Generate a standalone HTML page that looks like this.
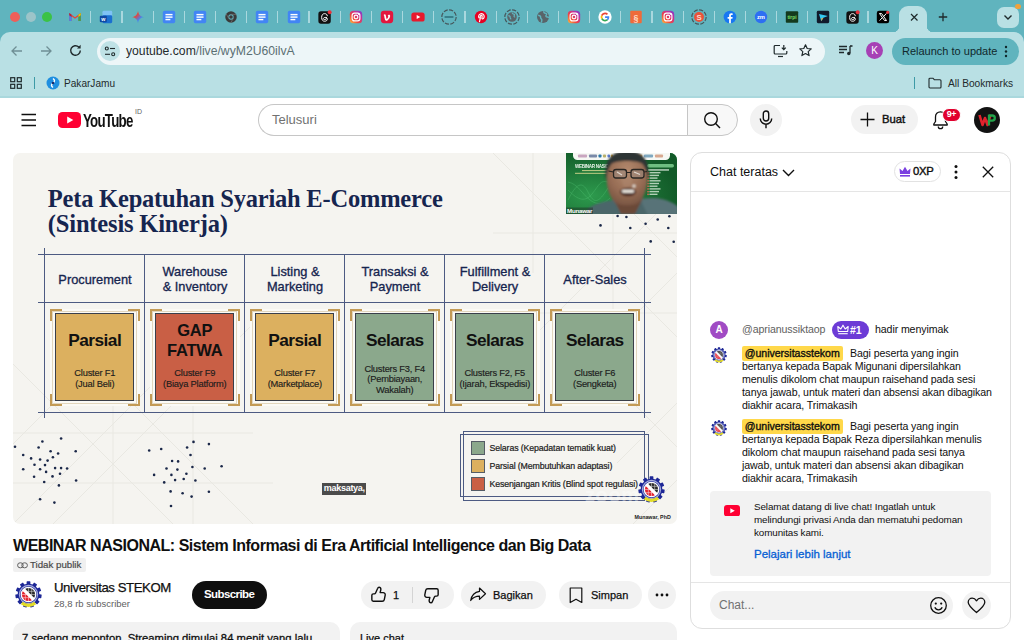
<!DOCTYPE html>
<html><head><meta charset="utf-8">
<style>
*{box-sizing:border-box;margin:0;padding:0}
html,body{width:1024px;height:640px;overflow:hidden;background:#fff;font-family:"Liberation Sans",sans-serif;color:#0f0f0f}
.abs{position:absolute}
#root{position:relative;width:1024px;height:640px;overflow:hidden}
/* browser chrome */
#tabbar{left:0;top:0;width:1024px;height:46px;background:#60b4be}
#toolbar{left:0;top:32px;width:1024px;height:65px;background:#b9e0e4;border-top-left-radius:10px;border-top-right-radius:10px}
#chromeline{left:0;top:96px;width:1024px;height:1.500px;background:#aad8dd}
.tl{width:10px;height:10px;border-radius:50%;top:11.700px}
.sep{top:10.500px;width:1.300px;height:12.500px;background:#a9d8de}
.ti{top:8.700px;width:16px;height:16px}
.ti svg{transform:scale(.885);transform-origin:50% 50%}
#url{left:97px;top:37.700px;width:728px;height:27px;border-radius:14px;background:#edf6f8}
.t{white-space:nowrap;line-height:1}

/*VCSS*/
.hd{text-align:center;font-size:12.800px;line-height:15px;color:#16254f;-webkit-text-stroke:.32px #16254f;white-space:nowrap}
.bx{text-align:center;font-weight:700;color:#111;white-space:nowrap}
.sm{text-align:center;font-size:9.300px;line-height:10.600px;letter-spacing:-.2px;color:#1c1c1c;-webkit-text-stroke:.15px #1c1c1c;white-space:nowrap}
.lg{font-size:8.800px;letter-spacing:-.13px;color:#1c1c1c;-webkit-text-stroke:.2px #1c1c1c}
/*/VCSS*//*CCSS*/
.cm{font-size:10.600px;color:#0f0f0f;letter-spacing:-.1px}
.bn{font-size:9.850px;color:#0f0f0f;letter-spacing:-.1px}
/*/CCSS*/</style></head><body><div id="root">
<!--CHROME-->
<div class="abs" id="tabbar"></div>
<div class="abs" id="toolbar"></div>
<div class="abs" id="chromeline"></div>
<div class="abs tl" style="left:10.2px;background:#ee5f59"></div>
<div class="abs tl" style="left:26.2px;background:#9cc4c9"></div>
<div class="abs tl" style="left:42.2px;background:#3bc246"></div>
<div class="abs ti" style="left:67.2px"><svg viewBox="0 0 16 16" width="16" height="16"><path d="M1.5 3.5v9h2.6V7.2L8 10l3.9-2.8v5.3h2.6v-9L8 8.2z" fill="#ea4335"/><path d="M1.5 3.5v9h2.6V5.4z" fill="#4285f4"/><path d="M14.5 3.5v9h-2.6V5.4z" fill="#34a853"/><path d="M11.9 5.4l2.6-1.9v2.6l-2.6 1.9z" fill="#fbbc04"/><path d="M4.1 5.4L1.5 3.5v2.6L4.1 8z" fill="#c5221f"/></svg></div>
<div class="abs sep" style="left:90.1px"></div>
<div class="abs ti" style="left:98.4px"><svg viewBox="0 0 16 16" width="16" height="16"><rect x="4" y="1" width="11" height="8" rx="1.5" fill="#7fc3f5"/><rect x="4" y="6" width="11" height="9" rx="1.5" fill="#1a6fd0"/><rect x="1" y="6.5" width="8" height="7.5" rx="1.2" fill="#0f4aa3"/><text x="5" y="12.6" font-family="Liberation Sans" font-size="6" font-weight="700" fill="#fff" text-anchor="middle">w</text></svg></div>
<div class="abs sep" style="left:121.3px"></div>
<div class="abs ti" style="left:129.6px"><svg viewBox="0 0 16 16" width="16" height="16"><defs><linearGradient id="gm" x1="0" y1="0" x2="1" y2="1"><stop offset="0" stop-color="#f5b400"/><stop offset=".35" stop-color="#ea4335"/><stop offset=".65" stop-color="#4285f4"/><stop offset="1" stop-color="#34a853"/></linearGradient></defs><path d="M8 .8C8.4 5 11 7.600 15.2 8 11 8.400 8.400 11 8 15.200 7.600 11 5 8.400.8 8 5 7.600 7.600 5 8 .8z" fill="url(#gm)"/></svg></div>
<div class="abs sep" style="left:152.5px"></div>
<div class="abs ti" style="left:160.7px"><svg viewBox="0 0 16 16" width="16" height="16"><rect x="1" y="1" width="14" height="14" rx="2" fill="#4285f4"/><rect x="4" y="4.5" width="8" height="1.6" fill="#fff"/><rect x="4" y="7.3" width="8" height="1.6" fill="#fff"/><rect x="4" y="10.1" width="5.5" height="1.6" fill="#fff"/></svg></div>
<div class="abs sep" style="left:183.7px"></div>
<div class="abs ti" style="left:191.9px"><svg viewBox="0 0 16 16" width="16" height="16"><rect x="1" y="1" width="14" height="14" rx="2" fill="#4285f4"/><rect x="4" y="4.5" width="8" height="1.6" fill="#fff"/><rect x="4" y="7.3" width="8" height="1.6" fill="#fff"/><rect x="4" y="10.1" width="5.5" height="1.6" fill="#fff"/></svg></div>
<div class="abs sep" style="left:214.9px"></div>
<div class="abs ti" style="left:223.1px"><svg viewBox="0 0 16 16" width="16" height="16"><circle cx="8" cy="8" r="6.500" fill="#3a3a3a"/><circle cx="8" cy="8" r="3" fill="#60b4be"/><circle cx="8" cy="8" r="2" fill="#3a3a3a"/><path d="M8 5h6M5.400 9.500l-3-5.200M10.600 9.500l-3 5.200" stroke="#777" stroke-width=".8" fill="none"/></svg></div>
<div class="abs sep" style="left:246.0px"></div>
<div class="abs ti" style="left:254.3px"><svg viewBox="0 0 16 16" width="16" height="16"><rect x="1" y="1" width="14" height="14" rx="2" fill="#4285f4"/><rect x="4" y="4.5" width="8" height="1.6" fill="#fff"/><rect x="4" y="7.3" width="8" height="1.6" fill="#fff"/><rect x="4" y="10.1" width="5.5" height="1.6" fill="#fff"/></svg></div>
<div class="abs sep" style="left:277.2px"></div>
<div class="abs ti" style="left:285.5px"><svg viewBox="0 0 16 16" width="16" height="16"><rect x="1" y="1" width="14" height="14" rx="2" fill="#4285f4"/><rect x="4" y="4.5" width="8" height="1.6" fill="#fff"/><rect x="4" y="7.3" width="8" height="1.6" fill="#fff"/><rect x="4" y="10.1" width="5.5" height="1.6" fill="#fff"/></svg></div>
<div class="abs sep" style="left:308.4px"></div>
<div class="abs ti" style="left:316.6px"><svg viewBox="0 0 16 16" width="16" height="16"><rect x="0.5" y="1.5" width="14" height="14" rx="3" fill="#111"/><path d="M10.6 6.6C10.3 4.9 9.2 4.2 7.6 4.2 5.4 4.2 4.2 5.8 4.2 8.5s1.2 4.3 3.4 4.3c1.8 0 3-1 3-2.3 0-1.3-1-2-2.4-2-1.2 0-2 .5-2 1.3 0 .7.6 1.2 1.5 1.2 1.3 0 2-1 1.9-2.6" fill="none" stroke="#fff" stroke-width="1.1" stroke-linecap="round"/><circle cx="13.3" cy="2.7" r="2.2" fill="#e8323c"/></svg></div>
<div class="abs sep" style="left:339.6px"></div>
<div class="abs ti" style="left:347.8px"><svg viewBox="0 0 16 16" width="16" height="16"><defs><linearGradient id="ig" x1="0" y1="1" x2="1" y2="0"><stop offset="0" stop-color="#fdc13f"/><stop offset=".35" stop-color="#f0483e"/><stop offset=".7" stop-color="#c4309b"/><stop offset="1" stop-color="#6a44d6"/></linearGradient></defs><rect x="1" y="1" width="14" height="14" rx="4" fill="url(#ig)"/><rect x="3.6" y="3.6" width="8.8" height="8.8" rx="2.6" fill="none" stroke="#fff" stroke-width="1.3"/><circle cx="8" cy="8" r="2.1" fill="none" stroke="#fff" stroke-width="1.3"/><circle cx="11" cy="5" r=".7" fill="#fff"/></svg></div>
<div class="abs sep" style="left:370.8px"></div>
<div class="abs ti" style="left:379.0px"><svg viewBox="0 0 16 16" width="16" height="16"><rect x="1" y="1" width="14" height="14" rx="3.500" fill="#e3173e"/><path d="M4.300 5.500c1-.9 2-.9 2.300.6l.7 3.400c.3 1 .6 1 1.300-.1.800-1.300 1.300-2.600.2-2.600.5-1.800 3.300-1.800 2.700.5-.5 1.900-2.600 5-4.300 5-1 0-1.400-.8-1.800-2.500-.4-1.600-.5-3.700-1.100-3.700z" fill="#fff"/></svg></div>
<div class="abs sep" style="left:401.9px"></div>
<div class="abs ti" style="left:410.2px"><svg viewBox="0 0 16 16" width="16" height="16"><rect x=".5" y="2.800" width="15" height="10.400" rx="3" fill="#e8192c"/><path d="M6.500 5.600v4.800L10.700 8z" fill="#fff"/></svg></div>
<div class="abs sep" style="left:433.1px"></div>
<div class="abs ti" style="left:441.4px"><svg viewBox="0 0 18 18" width="18" height="18" style="margin:-1px;transform:scale(.92)"><circle cx="9" cy="9" r="7.800" fill="none" stroke="#46595d" stroke-width="1.300" stroke-dasharray="4.600 1.500"/><path d="M4.200 9h9.600" stroke="#2c6e78" stroke-width="1.500"/></svg></div>
<div class="abs sep" style="left:464.3px"></div>
<div class="abs ti" style="left:472.5px"><svg viewBox="0 0 16 16" width="16" height="16"><circle cx="8" cy="8" r="7" fill="#e60023"/><path d="M6.300 13.300c.3-1.200.9-3.700 1-4.200-.6-1.300.1-2.900 1.200-2.900 1.300 0 .7 1.900.5 2.900-.2 1 .9 1.400 1.600.8 1.200-1 1.500-4-.2-5.100-2-1.300-5.100-.2-5.100 2.500 0 .9.300 1.300.6 1.700" fill="none" stroke="#fff" stroke-width="1.300" stroke-linecap="round"/></svg></div>
<div class="abs sep" style="left:495.5px"></div>
<div class="abs ti" style="left:503.7px"><svg viewBox="0 0 18 18" width="18" height="18" style="margin:-1px;transform:scale(.92)"><circle cx="9" cy="9" r="7.800" fill="none" stroke="#46595d" stroke-width="1.300" stroke-dasharray="4.600 1.500"/><circle cx="9" cy="9" r="5.200" fill="#596469"/><path d="M5 7.500c1.500.2 2.300.8 2 1.800-.3 1 .8 1.200.9 2.300M9.500 4.200c-.3 1 .5 1.500 1.400 1.600 1 .2 1.200 1 .5 1.700-.7.700.2 1.600 1.100 1.500" stroke="#60b4be" stroke-width="1.300" fill="none"/></svg></div>
<div class="abs sep" style="left:526.7px"></div>
<div class="abs ti" style="left:534.9px"><svg viewBox="0 0 16 16" width="16" height="16"><circle cx="8" cy="8" r="6.800" fill="#596469"/><path d="M2.500 6c1.800.3 3 1 2.800 2.400-.2 1.300 1.200 1.500 1.400 2.900.1 1-.6 1.800-.3 3M9 1.500c-.5 1.400.6 2 1.800 2.200 1.400.2 1.700 1.400.8 2.300-1 1 .2 2.200 1.400 2 1.100-.2 1.700.4 1.900 1.100" stroke="#60b4be" stroke-width="1.600" fill="none"/></svg></div>
<div class="abs sep" style="left:557.8px"></div>
<div class="abs ti" style="left:566.1px"><svg viewBox="0 0 16 16" width="16" height="16"><defs><linearGradient id="ig" x1="0" y1="1" x2="1" y2="0"><stop offset="0" stop-color="#fdc13f"/><stop offset=".35" stop-color="#f0483e"/><stop offset=".7" stop-color="#c4309b"/><stop offset="1" stop-color="#6a44d6"/></linearGradient></defs><rect x="1" y="1" width="14" height="14" rx="4" fill="url(#ig)"/><rect x="3.6" y="3.6" width="8.8" height="8.8" rx="2.6" fill="none" stroke="#fff" stroke-width="1.3"/><circle cx="8" cy="8" r="2.1" fill="none" stroke="#fff" stroke-width="1.3"/><circle cx="11" cy="5" r=".7" fill="#fff"/></svg></div>
<div class="abs sep" style="left:589.0px"></div>
<div class="abs ti" style="left:597.3px"><svg viewBox="0 0 16 16" width="16" height="16"><circle cx="8" cy="8" r="7.500" fill="#fff"/><path d="M12.800 8.150c0-.38-.03-.66-.1-.95H8.100v1.800h2.640c-.05.430-.34 1.090-.98 1.530l1.500 1.170c.9-.84 1.540-2.070 1.540-3.550z" fill="#4285f4"/><path d="M8.100 13c1.350 0 2.480-.440 3.300-1.210l-1.570-1.220c-.42.290-.98.5-1.730.5-1.320 0-2.440-.870-2.840-2.070l-1.620 1.250C4.460 11.890 6.140 13 8.100 13z" fill="#34a853"/><path d="M5.260 9c-.1-.31-.17-.65-.17-1s.06-.69.160-1L3.630 5.740C3.290 6.420 3.100 7.190 3.100 8s.19 1.580.53 2.260L5.260 9z" fill="#fbbc05"/><path d="M8.100 4.930c.94 0 1.570.4 1.930.74l1.410-1.380C10.570 3.490 9.450 3 8.100 3 6.140 3 4.460 4.110 3.630 5.740L5.250 7c.41-1.200 1.530-2.070 2.850-2.070z" fill="#ea4335"/></svg></div>
<div class="abs sep" style="left:620.2px"></div>
<div class="abs ti" style="left:628.4px"><svg viewBox="0 0 16 16" width="16" height="16"><rect x="1.500" y="1" width="13" height="14" rx="1" fill="#ef6b3a"/><text x="8" y="12" font-family="Liberation Sans" font-size="10" font-weight="700" fill="#ffd9c4" text-anchor="middle">§</text></svg></div>
<div class="abs sep" style="left:651.4px"></div>
<div class="abs ti" style="left:659.6px"><svg viewBox="0 0 16 16" width="16" height="16"><defs><linearGradient id="ig" x1="0" y1="1" x2="1" y2="0"><stop offset="0" stop-color="#fdc13f"/><stop offset=".35" stop-color="#f0483e"/><stop offset=".7" stop-color="#c4309b"/><stop offset="1" stop-color="#6a44d6"/></linearGradient></defs><rect x="1" y="1" width="14" height="14" rx="4" fill="url(#ig)"/><rect x="3.6" y="3.6" width="8.8" height="8.8" rx="2.6" fill="none" stroke="#fff" stroke-width="1.3"/><circle cx="8" cy="8" r="2.1" fill="none" stroke="#fff" stroke-width="1.3"/><circle cx="11" cy="5" r=".7" fill="#fff"/></svg></div>
<div class="abs sep" style="left:682.6px"></div>
<div class="abs ti" style="left:690.8px"><svg viewBox="0 0 18 18" width="18" height="18" style="margin:-1px;transform:scale(.92)"><circle cx="9" cy="9" r="7.800" fill="none" stroke="#46595d" stroke-width="1.300" stroke-dasharray="4.600 1.500"/><circle cx="9" cy="9" r="5.400" fill="#e8533a"/><text x="9" y="12.300" font-family="Liberation Sans" font-size="8.500" font-weight="700" fill="#ffd6cc" text-anchor="middle">S</text></svg></div>
<div class="abs sep" style="left:713.7px"></div>
<div class="abs ti" style="left:722.0px"><svg viewBox="0 0 16 16" width="16" height="16"><circle cx="8" cy="8" r="7.200" fill="#1877f2"/><path d="M9 15v-5h1.700l.3-2H9V6.700c0-.6.300-1 1.100-1H11V4c-.3 0-.8-.1-1.500-.1C8 3.900 7 4.800 7 6.400V8H5.300v2H7v5z" fill="#fff"/></svg></div>
<div class="abs sep" style="left:744.9px"></div>
<div class="abs ti" style="left:753.2px"><svg viewBox="0 0 16 16" width="16" height="16"><circle cx="8" cy="8" r="7" fill="#2d6ff2"/><text x="8" y="10.300" font-family="Liberation Sans" font-size="6.500" font-weight="700" fill="#fff" text-anchor="middle">zm</text></svg></div>
<div class="abs sep" style="left:776.1px"></div>
<div class="abs ti" style="left:784.3px"><svg viewBox="0 0 16 16" width="16" height="16"><rect x="1" y="1.500" width="14" height="13" rx="1" fill="#143a1e"/><text x="8" y="10" font-family="Liberation Sans" font-size="5.500" font-weight="700" fill="#7fe06a" text-anchor="middle">tirpi</text></svg></div>
<div class="abs sep" style="left:806.9px"></div>
<div class="abs ti" style="left:814.7px"><svg viewBox="0 0 16 16" width="16" height="16"><rect x="1" y="1" width="14" height="14" rx="1.500" fill="#111a2b"/><path d="M3.500 4.500l10 2.500-5 1.800-2.500 4z" fill="#35c8f0"/><path d="M8.500 8.800l-2.500 4 .3-3.300z" fill="#f0a030"/></svg></div>
<div class="abs sep" style="left:837.0px"></div>
<div class="abs ti" style="left:844.6px"><svg viewBox="0 0 16 16" width="16" height="16"><rect x="0.5" y="1.5" width="14" height="14" rx="3" fill="#111"/><path d="M10.6 6.6C10.3 4.9 9.2 4.2 7.6 4.2 5.4 4.2 4.2 5.8 4.2 8.5s1.2 4.3 3.4 4.3c1.8 0 3-1 3-2.3 0-1.3-1-2-2.4-2-1.2 0-2 .5-2 1.3 0 .7.6 1.2 1.5 1.2 1.3 0 2-1 1.9-2.6" fill="none" stroke="#fff" stroke-width="1.1" stroke-linecap="round"/><circle cx="13.3" cy="2.7" r="2.2" fill="#e8323c"/></svg></div>
<div class="abs sep" style="left:867.3px"></div>
<div class="abs ti" style="left:875.3px"><svg viewBox="0 0 16 16" width="16" height="16"><rect x="1" y="1" width="14" height="14" rx="2.500" fill="#000"/><path d="M4 4h2.300l5.700 8H9.700zM11.800 4L8.700 7.500M7.300 8.600L4.200 12" stroke="#fff" stroke-width="1.100" fill="none"/><circle cx="13.300" cy="2.700" r="1.800" fill="#e8323c"/></svg></div>
<div class="abs" style="left:899px;top:6px;width:28px;height:28px;background:#b9e0e4;border-radius:9px 9px 0 0"></div>
<div class="abs" style="left:893px;top:26px;width:6px;height:8px;background:radial-gradient(circle at 0 0,#60b4be 6px,#b9e0e4 6.500px)"></div>
<div class="abs" style="left:927px;top:26px;width:6px;height:8px;background:radial-gradient(circle at 100% 0,#60b4be 6px,#b9e0e4 6.500px)"></div>
<svg class="abs" style="left:908.500px;top:12px" width="10" height="10" viewBox="0 0 10 10"><path d="M2 2l6.500 6.500M8.500 2L2 8.500" stroke="#1f2a2c" stroke-width="1.200"/></svg>
<svg class="abs" style="left:936.500px;top:10.500px" width="12" height="12" viewBox="0 0 12 12"><path d="M6 1.800v8.400M1.800 6h8.400" stroke="#1f2a2c" stroke-width="1.300"/></svg>
<div class="abs" style="left:997px;top:7px;width:22px;height:21px;border-radius:7px;background:#b9e0e4"></div>
<div class="abs" style="left:1015px;top:3.500px;width:5.500px;height:5.500px;border-radius:50%;background:#f0a23c"></div>
<svg class="abs" style="left:1003px;top:14px" width="10" height="7" viewBox="0 0 10 7"><path d="M1.500 1.500L5 5l3.500-3.500" stroke="#1f2a2c" stroke-width="1.400" fill="none"/></svg>
<svg class="abs" style="left:10px;top:44px" width="14" height="14" viewBox="0 0 14 14"><path d="M12 7H2.500M6.500 2.500L2 7l4.500 4.500" stroke="#6f8f95" stroke-width="1.300" fill="none"/></svg>
<svg class="abs" style="left:39px;top:44px" width="14" height="14" viewBox="0 0 14 14"><path d="M2 7h9.500M7.500 2.500L12 7l-4.500 4.500" stroke="#6f8f95" stroke-width="1.300" fill="none"/></svg>
<svg class="abs" style="left:68px;top:43px" width="15" height="15" viewBox="0 0 15 15"><path d="M12.300 7.500a4.800 4.800 0 1 1-1.500-3.500" stroke="#1f2a2c" stroke-width="1.400" fill="none"/><path d="M12.600 1.800v3.600H9z" fill="#1f2a2c"/></svg>
<div class="abs" id="url"></div>
<div class="abs" style="left:100px;top:41px;width:20px;height:20px;border-radius:50%;background:#bfe2e6"></div>
<svg class="abs" style="left:104px;top:46px" width="12" height="11" viewBox="0 0 12 11"><circle cx="2.800" cy="2.500" r="1.500" fill="none" stroke="#1f2a2c" stroke-width="1.100"/><path d="M6 2.500h5" stroke="#1f2a2c" stroke-width="1.100"/><circle cx="9.200" cy="8.300" r="1.500" fill="none" stroke="#1f2a2c" stroke-width="1.100"/><path d="M1 8.300h5" stroke="#1f2a2c" stroke-width="1.100"/></svg>
<div class="abs t" style="left:126px;top:45px;font-size:12.200px;color:#1f2a2c">youtube.com<span style="color:#5b6f73">/live/wyM2U60ilvA</span></div>
<svg class="abs" style="left:773px;top:44px" width="15" height="14" viewBox="0 0 15 14"><path d="M7 1.500H2.200a1 1 0 0 0-1 1v6.500a1 1 0 0 0 1 1h10.600a1 1 0 0 0 1-1V7" stroke="#1f2a2c" stroke-width="1.200" fill="none"/><path d="M5 12.500h5" stroke="#1f2a2c" stroke-width="1.200"/><path d="M10.800 1v4.500M8.800 3.700l2 2 2-2" stroke="#1f2a2c" stroke-width="1.200" fill="none"/></svg>
<svg class="abs" style="left:798px;top:43px" width="15" height="15" viewBox="0 0 15 15"><path d="M7.500 1.800l1.700 3.700 4 .4-3 2.700.9 4-3.600-2.100-3.600 2.100.9-4-3-2.700 4-.4z" stroke="#1f2a2c" stroke-width="1.200" fill="none" stroke-linejoin="round"/></svg>
<svg class="abs" style="left:838px;top:44px" width="15" height="13" viewBox="0 0 15 13"><path d="M1 2.500h8M1 5.500h8M1 8.500h5" stroke="#1f2a2c" stroke-width="1.300"/><path d="M12 2v7" stroke="#1f2a2c" stroke-width="1.300"/><path d="M12 2h2.500" stroke="#1f2a2c" stroke-width="1.600"/><circle cx="10.800" cy="9.500" r="1.700" fill="#1f2a2c"/></svg>
<div class="abs" style="left:866px;top:42px;width:17px;height:17px;border-radius:50%;background:#a640b5;color:#fff;font-size:10px;text-align:center;line-height:17px">K</div>
<div class="abs" style="left:892px;top:38px;width:127px;height:27px;border-radius:14px;background:#60b4be"></div>
<div class="abs t" style="left:902px;top:46px;font-size:11px;color:#10282c">Relaunch to update</div>
<svg class="abs" style="left:1004px;top:45px" width="4" height="13" viewBox="0 0 4 13"><circle cx="2" cy="2" r="1.200" fill="#10282c"/><circle cx="2" cy="6.500" r="1.200" fill="#10282c"/><circle cx="2" cy="11" r="1.200" fill="#10282c"/></svg>
<svg class="abs" style="left:10px;top:77px" width="12" height="12" viewBox="0 0 12 12"><rect x=".7" y=".7" width="4" height="4" fill="none" stroke="#1f2a2c" stroke-width="1.200"/><rect x="7.300" y=".7" width="4" height="4" fill="none" stroke="#1f2a2c" stroke-width="1.200"/><rect x=".7" y="7.300" width="4" height="4" fill="none" stroke="#1f2a2c" stroke-width="1.200"/><rect x="7.300" y="7.300" width="4" height="4" fill="none" stroke="#1f2a2c" stroke-width="1.200"/></svg>
<div class="abs" style="left:34px;top:77px;width:1px;height:12px;background:#3d9aa6"></div>
<svg class="abs" style="left:46px;top:76px" width="14" height="14" viewBox="0 0 14 14"><circle cx="7" cy="7" r="6.500" fill="#1f8fe0"/><path d="M7 2.500c2 1.500 2 3-0 4.500s-2 3 0 4.500" stroke="#fff" stroke-width="1.400" fill="none"/><circle cx="7" cy="7" r="1.300" fill="#1a2a6c"/></svg>
<div class="abs t" style="left:64px;top:78.500px;font-size:10.100px;color:#1f2a2c">PakarJamu</div>
<div class="abs" style="left:914px;top:77px;width:1px;height:12px;background:#3d9aa6"></div>
<svg class="abs" style="left:928px;top:77px" width="14" height="12" viewBox="0 0 14 12"><path d="M1 2.200a1 1 0 0 1 1-1h3l1.300 1.500H12a1 1 0 0 1 1 1V10a1 1 0 0 1-1 1H2a1 1 0 0 1-1-1z" fill="none" stroke="#1f2a2c" stroke-width="1.100"/></svg>
<div class="abs t" style="left:948px;top:78.500px;font-size:10.200px;color:#1f2a2c">All Bookmarks</div>
<!--/CHROME-->
<!--YTHEAD-->
<svg class="abs" style="left:21px;top:113px" width="16" height="14" viewBox="0 0 16 14"><path d="M.5 1.500h14.500M.5 7h14.500M.5 12.500h14.500" stroke="#0f0f0f" stroke-width="1.300"/></svg>
<svg class="abs" style="left:58px;top:111.500px" width="23" height="16" viewBox="0 0 23 16"><rect x="0" y="0" width="23" height="16" rx="4.500" fill="#ff0033"/><path d="M9.200 4.400v7.200L15.300 8z" fill="#fff"/></svg>
<div class="abs t" id="ytword" style="left:83px;top:110.500px;font-size:19px;font-weight:700;letter-spacing:-1.100px;transform-origin:0 0;transform:scaleX(.7);color:#111">YouTube</div>
<div class="abs t" style="left:135px;top:108px;font-size:7px;color:#606060">ID</div>
<div class="abs" style="left:258px;top:104px;width:430px;height:32px;border:1px solid #c6c6c6;border-right:none;border-radius:16px 0 0 16px;background:#fff"></div>
<div class="abs" style="left:687px;top:104px;width:51px;height:32px;border:1px solid #c6c6c6;border-radius:0 16px 16px 0;background:#f8f8f8"></div>
<div class="abs t" style="left:272px;top:113px;font-size:13px;color:#717171">Telusuri</div>
<svg class="abs" style="left:703px;top:111px" width="18" height="18" viewBox="0 0 18 18"><circle cx="8" cy="8" r="6.300" fill="none" stroke="#0f0f0f" stroke-width="1.400"/><path d="M12.600 12.600L17 17" stroke="#0f0f0f" stroke-width="1.400"/></svg>
<div class="abs" style="left:750px;top:104px;width:32px;height:32px;border-radius:50%;background:#f2f2f2"></div>
<svg class="abs" style="left:758px;top:110px" width="16" height="20" viewBox="0 0 16 20"><rect x="5.300" y="1" width="5.400" height="10" rx="2.700" fill="none" stroke="#0f0f0f" stroke-width="1.400"/><path d="M2.300 8.500a5.700 5.700 0 0 0 11.400 0M8 14.200v4" stroke="#0f0f0f" stroke-width="1.400" fill="none"/></svg>
<div class="abs" style="left:851px;top:105px;width:67px;height:29px;border-radius:15px;background:#f2f2f2"></div>
<svg class="abs" style="left:860px;top:112px" width="15" height="15" viewBox="0 0 15 15"><path d="M7.500 .5v14M.5 7.500h14" stroke="#0f0f0f" stroke-width="1.300"/></svg>
<div class="abs t" style="left:882px;top:114px;font-size:11.300px;color:#0f0f0f;-webkit-text-stroke:.4px #0f0f0f;letter-spacing:-.05px">Buat</div>
<svg class="abs" style="left:932px;top:110px" width="17" height="20" viewBox="0 0 17 20"><path d="M8.500 1.800c-3 0-5 2.200-5 5.200v4.500L1.800 14v1h13.400v-1l-1.700-2.500V7c0-3-2-5.200-5-5.200z" fill="none" stroke="#0f0f0f" stroke-width="1.300" stroke-linejoin="round"/><path d="M6.300 16.500a2.200 2.200 0 0 0 4.400 0" fill="none" stroke="#0f0f0f" stroke-width="1.300"/></svg>
<div class="abs" style="left:942px;top:108px;width:19px;height:13.500px;border-radius:7px;background:#e1002d;border:1px solid #fff;color:#fff;font-size:9px;font-weight:700;text-align:center;line-height:11.500px;letter-spacing:-.3px">9+</div>
<div class="abs" style="left:974px;top:107px;width:26px;height:26px;border-radius:50%;background:#121212;overflow:hidden"><svg width="26" height="26" viewBox="0 0 26 26"><path d="M5.500 8l3 10 2.500-7 2.500 7 3-10" stroke="#e1222c" stroke-width="2.600" fill="none" stroke-linejoin="round"/><path d="M15 7.500v11M15 8.500h3.200a2.600 2.600 0 0 1 0 5.200H15" stroke="#23a34a" stroke-width="2.300" fill="none"/></svg></div>
<!--/YTHEAD-->
<!--VIDEO-->
<div class="abs" id="video" style="left:13px;top:153px;width:664px;height:371px;border-radius:7px;overflow:hidden;background:#f5f4f0">
<svg class="abs" style="left:0;top:0" width="664" height="371" viewBox="0 0 664 371"><g stroke="#e9e8e2" stroke-width="1" fill="none"><path d="M480 0l184 184M560 0l104 104M664 40L480 224M664 120L560 224M520 0v120M600 0v200M480 80h184M500 160h164"/><path d="M0 371l160-160M0 291l120-120M40 371l200-200M0 211l160 160M60 191l180 180M100 200v171M180 220v151M0 280h240M0 330h260"/><path d="M620 250l44 44M664 250l-60 60M620 371l44-44"/></g></svg>
<div class="abs t" id="st1" style="left:34.8px;top:34.30000000000001px;font-family:'Liberation Serif',serif;font-weight:700;font-size:24.500px;color:#16254f;letter-spacing:-.21px">Peta Kepatuhan Syariah E-Commerce</div>
<div class="abs t" id="st2" style="left:34.8px;top:59.30000000000001px;font-family:'Liberation Serif',serif;font-weight:700;font-size:24.500px;color:#16254f;letter-spacing:-.17px">(Sintesis Kinerja)</div>
<div class="abs" style="left:25.2px;top:101.0px;width:613.0px;height:1.0px;background:#4c5a82"></div>
<div class="abs" style="left:25.2px;top:149.0px;width:613.0px;height:1.0px;background:#4c5a82"></div>
<div class="abs" style="left:25.2px;top:258.8px;width:613.0px;height:1.0px;background:#4c5a82"></div>
<div class="abs" style="left:31.4px;top:95.2px;width:1.0px;height:170.3px;background:#4c5a82"></div>
<div class="abs" style="left:131.4px;top:101.0px;width:1.0px;height:158.3px;background:#4c5a82"></div>
<div class="abs" style="left:231.4px;top:101.0px;width:1.0px;height:158.3px;background:#4c5a82"></div>
<div class="abs" style="left:331.4px;top:101.0px;width:1.0px;height:158.3px;background:#4c5a82"></div>
<div class="abs" style="left:431.4px;top:101.0px;width:1.0px;height:158.3px;background:#4c5a82"></div>
<div class="abs" style="left:531.4px;top:101.0px;width:1.0px;height:158.3px;background:#4c5a82"></div>
<div class="abs" style="left:631.4px;top:95.2px;width:1.0px;height:170.3px;background:#4c5a82"></div>
<div class="abs hd" style="left:32px;top:119px;width:100px">Procurement</div>
<div class="abs hd" style="left:132px;top:111px;width:100px">Warehouse<br>&amp; Inventory</div>
<div class="abs hd" style="left:232px;top:111px;width:100px">Listing &amp;<br>Marketing</div>
<div class="abs hd" style="left:332px;top:111px;width:100px">Transaksi &amp;<br>Payment</div>
<div class="abs hd" style="left:432px;top:111px;width:100px">Fulfillment &amp;<br>Delivery</div>
<div class="abs hd" style="left:532px;top:119px;width:100px">After-Sales</div>
<div class="abs" style="left:37.0px;top:155.5px;width:89.5px;height:97.5px;background:#fbfaf6"></div>
<div class="abs" style="left:39.2px;top:157.7px;width:85.0px;height:93.0px;border:1px solid #e2d6bd"></div>
<div class="abs" style="left:37.0px;top:155.5px;width:12.0px;height:12.0px;border-left:2px solid #c39a55;border-top:2px solid #c39a55"></div>
<div class="abs" style="left:114.5px;top:155.5px;width:12.0px;height:12.0px;border-right:2px solid #c39a55;border-top:2px solid #c39a55"></div>
<div class="abs" style="left:37.0px;top:241.0px;width:12.0px;height:12.0px;border-left:2px solid #c39a55;border-bottom:2px solid #c39a55"></div>
<div class="abs" style="left:114.5px;top:241.0px;width:12.0px;height:12.0px;border-right:2px solid #c39a55;border-bottom:2px solid #c39a55"></div>
<div class="abs" style="left:42.4px;top:160.3px;width:79.0px;height:88.2px;background:#dcb05f;border:1px solid #3a3f4a"></div>
<div class="abs bx" style="left:37px;top:177.89999999999998px;width:89.500px;font-size:17.300px;line-height:19px;letter-spacing:-.55px">Parsial</div>
<div class="abs sm" style="left:32px;top:215.10000000000002px;width:99.500px">Cluster F1<br>(Jual Beli)</div>
<div class="abs" style="left:137.0px;top:155.5px;width:89.5px;height:97.5px;background:#fbfaf6"></div>
<div class="abs" style="left:139.2px;top:157.7px;width:85.0px;height:93.0px;border:1px solid #e2d6bd"></div>
<div class="abs" style="left:137.0px;top:155.5px;width:12.0px;height:12.0px;border-left:2px solid #c39a55;border-top:2px solid #c39a55"></div>
<div class="abs" style="left:214.5px;top:155.5px;width:12.0px;height:12.0px;border-right:2px solid #c39a55;border-top:2px solid #c39a55"></div>
<div class="abs" style="left:137.0px;top:241.0px;width:12.0px;height:12.0px;border-left:2px solid #c39a55;border-bottom:2px solid #c39a55"></div>
<div class="abs" style="left:214.5px;top:241.0px;width:12.0px;height:12.0px;border-right:2px solid #c39a55;border-bottom:2px solid #c39a55"></div>
<div class="abs" style="left:142.4px;top:160.3px;width:79.0px;height:88.2px;background:#c95f45;border:1px solid #3a3f4a"></div>
<div class="abs bx" style="left:137px;top:168.39999999999998px;width:89.500px;font-size:16.500px;line-height:19.500px;letter-spacing:-.2px">GAP<br>FATWA</div>
<div class="abs sm" style="left:132px;top:215.10000000000002px;width:99.500px">Cluster F9<br>(Biaya Platform)</div>
<div class="abs" style="left:237.0px;top:155.5px;width:89.5px;height:97.5px;background:#fbfaf6"></div>
<div class="abs" style="left:239.2px;top:157.7px;width:85.0px;height:93.0px;border:1px solid #e2d6bd"></div>
<div class="abs" style="left:237.0px;top:155.5px;width:12.0px;height:12.0px;border-left:2px solid #c39a55;border-top:2px solid #c39a55"></div>
<div class="abs" style="left:314.5px;top:155.5px;width:12.0px;height:12.0px;border-right:2px solid #c39a55;border-top:2px solid #c39a55"></div>
<div class="abs" style="left:237.0px;top:241.0px;width:12.0px;height:12.0px;border-left:2px solid #c39a55;border-bottom:2px solid #c39a55"></div>
<div class="abs" style="left:314.5px;top:241.0px;width:12.0px;height:12.0px;border-right:2px solid #c39a55;border-bottom:2px solid #c39a55"></div>
<div class="abs" style="left:242.4px;top:160.3px;width:79.0px;height:88.2px;background:#dcb05f;border:1px solid #3a3f4a"></div>
<div class="abs bx" style="left:237px;top:177.89999999999998px;width:89.500px;font-size:17.300px;line-height:19px;letter-spacing:-.55px">Parsial</div>
<div class="abs sm" style="left:232px;top:215.10000000000002px;width:99.500px">Cluster F7<br>(Marketplace)</div>
<div class="abs" style="left:337.0px;top:155.5px;width:89.5px;height:97.5px;background:#fbfaf6"></div>
<div class="abs" style="left:339.2px;top:157.7px;width:85.0px;height:93.0px;border:1px solid #e2d6bd"></div>
<div class="abs" style="left:337.0px;top:155.5px;width:12.0px;height:12.0px;border-left:2px solid #c39a55;border-top:2px solid #c39a55"></div>
<div class="abs" style="left:414.5px;top:155.5px;width:12.0px;height:12.0px;border-right:2px solid #c39a55;border-top:2px solid #c39a55"></div>
<div class="abs" style="left:337.0px;top:241.0px;width:12.0px;height:12.0px;border-left:2px solid #c39a55;border-bottom:2px solid #c39a55"></div>
<div class="abs" style="left:414.5px;top:241.0px;width:12.0px;height:12.0px;border-right:2px solid #c39a55;border-bottom:2px solid #c39a55"></div>
<div class="abs" style="left:342.4px;top:160.3px;width:79.0px;height:88.2px;background:#8ba88c;border:1px solid #3a3f4a"></div>
<div class="abs bx" style="left:337px;top:177.89999999999998px;width:89.500px;font-size:17.300px;line-height:19px;letter-spacing:-.55px">Selaras</div>
<div class="abs sm" style="left:332px;top:210.60000000000002px;width:99.500px">Clusters F3, F4<br>(Pembiayaan,<br>Wakalah)</div>
<div class="abs" style="left:437.0px;top:155.5px;width:89.5px;height:97.5px;background:#fbfaf6"></div>
<div class="abs" style="left:439.2px;top:157.7px;width:85.0px;height:93.0px;border:1px solid #e2d6bd"></div>
<div class="abs" style="left:437.0px;top:155.5px;width:12.0px;height:12.0px;border-left:2px solid #c39a55;border-top:2px solid #c39a55"></div>
<div class="abs" style="left:514.5px;top:155.5px;width:12.0px;height:12.0px;border-right:2px solid #c39a55;border-top:2px solid #c39a55"></div>
<div class="abs" style="left:437.0px;top:241.0px;width:12.0px;height:12.0px;border-left:2px solid #c39a55;border-bottom:2px solid #c39a55"></div>
<div class="abs" style="left:514.5px;top:241.0px;width:12.0px;height:12.0px;border-right:2px solid #c39a55;border-bottom:2px solid #c39a55"></div>
<div class="abs" style="left:442.4px;top:160.3px;width:79.0px;height:88.2px;background:#8ba88c;border:1px solid #3a3f4a"></div>
<div class="abs bx" style="left:437px;top:177.89999999999998px;width:89.500px;font-size:17.300px;line-height:19px;letter-spacing:-.55px">Selaras</div>
<div class="abs sm" style="left:432px;top:215.10000000000002px;width:99.500px">Clusters F2, F5<br>(Ijarah, Ekspedisi)</div>
<div class="abs" style="left:537.0px;top:155.5px;width:89.5px;height:97.5px;background:#fbfaf6"></div>
<div class="abs" style="left:539.2px;top:157.7px;width:85.0px;height:93.0px;border:1px solid #e2d6bd"></div>
<div class="abs" style="left:537.0px;top:155.5px;width:12.0px;height:12.0px;border-left:2px solid #c39a55;border-top:2px solid #c39a55"></div>
<div class="abs" style="left:614.5px;top:155.5px;width:12.0px;height:12.0px;border-right:2px solid #c39a55;border-top:2px solid #c39a55"></div>
<div class="abs" style="left:537.0px;top:241.0px;width:12.0px;height:12.0px;border-left:2px solid #c39a55;border-bottom:2px solid #c39a55"></div>
<div class="abs" style="left:614.5px;top:241.0px;width:12.0px;height:12.0px;border-right:2px solid #c39a55;border-bottom:2px solid #c39a55"></div>
<div class="abs" style="left:542.4px;top:160.3px;width:79.0px;height:88.2px;background:#8ba88c;border:1px solid #3a3f4a"></div>
<div class="abs bx" style="left:537px;top:177.89999999999998px;width:89.500px;font-size:17.300px;line-height:19px;letter-spacing:-.55px">Selaras</div>
<div class="abs sm" style="left:532px;top:215.10000000000002px;width:99.500px">Cluster F6<br>(Sengketa)</div>
<svg class="abs" style="left:0;top:0" width="664" height="371" viewBox="0 0 664 371"><g fill="#1a2748"><circle cx="2.0" cy="293.7" r="1.300"/><circle cx="10.2" cy="302.0" r="1.300"/><circle cx="18.1" cy="305.4" r="1.300"/><circle cx="27.1" cy="306.5" r="1.300"/><circle cx="29.4" cy="288.5" r="1.300"/><circle cx="25.6" cy="294.5" r="1.300"/><circle cx="37.6" cy="298.2" r="1.300"/><circle cx="48.1" cy="285.5" r="1.300"/><circle cx="45.1" cy="300.5" r="1.300"/><circle cx="39.9" cy="304.2" r="1.300"/><circle cx="62.7" cy="298.2" r="1.300"/><circle cx="34.6" cy="307.6" r="1.300"/><circle cx="32.0" cy="312.1" r="1.300"/><circle cx="21.5" cy="311.7" r="1.300"/><circle cx="10.2" cy="316.2" r="1.300"/><circle cx="27.1" cy="316.2" r="1.300"/><circle cx="42.1" cy="315.1" r="1.300"/><circle cx="48.1" cy="315.1" r="1.300"/><circle cx="54.1" cy="315.5" r="1.300"/><circle cx="33.1" cy="318.9" r="1.300"/><circle cx="47.0" cy="320.7" r="1.300"/><circle cx="21.1" cy="323.7" r="1.300"/><circle cx="39.5" cy="323.4" r="1.300"/><circle cx="31.2" cy="329.0" r="1.300"/><circle cx="63.1" cy="327.5" r="1.300"/><circle cx="45.9" cy="332.4" r="1.300"/><circle cx="27.1" cy="346.2" r="1.300"/><circle cx="41.4" cy="349.6" r="1.300"/><circle cx="136.2" cy="297.5" r="1.300"/><circle cx="148.2" cy="296.0" r="1.300"/><circle cx="174.1" cy="294.5" r="1.300"/><circle cx="180.5" cy="288.9" r="1.300"/><circle cx="195.9" cy="291.1" r="1.300"/><circle cx="177.5" cy="302.0" r="1.300"/><circle cx="159.1" cy="308.0" r="1.300"/><circle cx="165.1" cy="308.4" r="1.300"/><circle cx="208.6" cy="313.2" r="1.300"/><circle cx="179.4" cy="314.0" r="1.300"/><circle cx="191.7" cy="315.5" r="1.300"/><circle cx="153.5" cy="315.5" r="1.300"/><circle cx="164.4" cy="316.6" r="1.300"/><circle cx="141.1" cy="321.9" r="1.300"/><circle cx="158.4" cy="321.9" r="1.300"/><circle cx="173.4" cy="320.7" r="1.300"/><circle cx="162.1" cy="327.1" r="1.300"/><circle cx="170.7" cy="326.0" r="1.300"/><circle cx="182.4" cy="327.5" r="1.300"/><circle cx="151.2" cy="329.4" r="1.300"/><circle cx="157.6" cy="338.4" r="1.300"/><circle cx="169.6" cy="340.2" r="1.300"/><circle cx="178.6" cy="343.6" r="1.300"/><circle cx="195.9" cy="338.7" r="1.300"/><circle cx="158.0" cy="353.0" r="1.300"/><circle cx="604.6" cy="63.0" r="1.300"/><circle cx="613.4" cy="64.0" r="1.300"/><circle cx="587.5" cy="72.4" r="1.300"/><circle cx="617.3" cy="75.0" r="1.300"/><circle cx="632.6" cy="70.7" r="1.300"/><circle cx="644.7" cy="66.5" r="1.300"/><circle cx="656.4" cy="63.3" r="1.300"/><circle cx="655.3" cy="75.0" r="1.300"/><circle cx="637.7" cy="88.4" r="1.300"/><circle cx="660.7" cy="88.8" r="1.300"/></g></svg>
<div class="abs" style="left:309.2px;top:330.3px;width:44.2px;height:11.5px;background:#4b4b4b;color:#fff;font-size:9px;font-weight:700;line-height:11.500px;text-align:center;letter-spacing:-.3px">maksatya,</div>
<div class="abs" style="left:450.3px;top:278.0px;width:181.8px;height:69.5px;border:1px solid #4c5a82"></div>
<div class="abs" style="left:447.1px;top:281.4px;width:188.6px;height:62.5px;border:1px solid #4c5a82"></div>
<div class="abs" style="left:457.5px;top:287.8px;width:14.0px;height:13.8px;background:#8ba88c;border:1px solid #555c66"></div>
<div class="abs t lg" style="left:476.5px;top:290.90000000000003px">Selaras (Kepadatan tematik kuat)</div>
<div class="abs" style="left:457.5px;top:306.0px;width:14.0px;height:13.8px;background:#dcb05f;border:1px solid #555c66"></div>
<div class="abs t lg" style="left:476.5px;top:309.1px">Parsial (Membutuhkan adaptasi)</div>
<div class="abs" style="left:457.5px;top:324.2px;width:14.0px;height:13.8px;background:#c95f45;border:1px solid #555c66"></div>
<div class="abs t lg" style="left:476.5px;top:327.3px">Kesenjangan Kritis (Blind spot regulasi)</div>
<div class="abs t" id="zm" style="left:572px;top:331.5px;font-size:20px;font-weight:700;color:rgba(255,255,255,.4);letter-spacing:.6px">zoom</div>
<svg class="abs" style="left:624.5px;top:323.3px;" width="27.0" height="27.0" viewBox="-15 -15 30 30"><defs><clipPath id="gc1"><circle r="7.300"/></clipPath></defs><rect x="-2.100" y="-14.600" width="4.200" height="5" rx=".6" fill="#1d2796" transform="rotate(0.0)"/><rect x="-2.100" y="-14.600" width="4.200" height="5" rx=".6" fill="#1d2796" transform="rotate(32.7)"/><rect x="-2.100" y="-14.600" width="4.200" height="5" rx=".6" fill="#1d2796" transform="rotate(65.5)"/><rect x="-2.100" y="-14.600" width="4.200" height="5" rx=".6" fill="#1d2796" transform="rotate(98.2)"/><rect x="-2.100" y="-14.600" width="4.200" height="5" rx=".6" fill="#1d2796" transform="rotate(130.9)"/><rect x="-2.100" y="-14.600" width="4.200" height="5" rx=".6" fill="#1d2796" transform="rotate(163.6)"/><rect x="-2.100" y="-14.600" width="4.200" height="5" rx=".6" fill="#1d2796" transform="rotate(196.4)"/><rect x="-2.100" y="-14.600" width="4.200" height="5" rx=".6" fill="#1d2796" transform="rotate(229.1)"/><rect x="-2.100" y="-14.600" width="4.200" height="5" rx=".6" fill="#1d2796" transform="rotate(261.8)"/><rect x="-2.100" y="-14.600" width="4.200" height="5" rx=".6" fill="#1d2796" transform="rotate(294.5)"/><rect x="-2.100" y="-14.600" width="4.200" height="5" rx=".6" fill="#1d2796" transform="rotate(327.3)"/><circle r="12" fill="#1d2796"/><circle r="10.700" fill="#aab0de"/><circle r="9.500" fill="#2a34a0"/><circle r="8.700" fill="#fff"/><g clip-path="url(#gc1)"><rect x="-8" y="-8" width="16" height="16" fill="#fff"/><path d="M-9 -6.500L6.500 9H-9z" fill="#e4222e"/><path d="M-6.500 -9H9V6.500z" fill="#2b2b2b"/><g stroke="#fff" stroke-width=".7" opacity=".75"><path d="M-8 0h16M-8 3.500h16M-8 -3.500h16M0 -8v16M3.500 -8v16M-3.500 -8v16"/></g></g><path d="M-7.45 9.53A12.1 12.1 0 0 0 7.45 9.53" stroke="#e3dc28" stroke-width="3.600" fill="none"/></svg>
<div class="abs t" style="left:621.5px;top:362px;font-size:5.300px;font-weight:700;color:#222">Munawar, PhD</div>
<div class="abs" style="left:553px;top:0;width:111px;height:61px;overflow:hidden;background:#177a38"><svg class="abs" style="left:0;top:0" width="111" height="61" viewBox="566 153 111 61"><defs><radialGradient id="gg" cx=".22" cy=".7" r=".8"><stop offset="0" stop-color="#2d9a4d"/><stop offset=".6" stop-color="#1c7236"/><stop offset="1" stop-color="#125a28"/></radialGradient><radialGradient id="sk" cx=".5" cy=".35" r=".7"><stop offset="0" stop-color="#b48a6e"/><stop offset=".6" stop-color="#966c54"/><stop offset="1" stop-color="#73513f"/></radialGradient><filter id="bl" x="-10%" y="-10%" width="120%" height="120%"><feGaussianBlur stdDeviation=".9"/></filter><filter id="bl2"><feGaussianBlur stdDeviation=".45"/></filter></defs><rect x="566" y="153" width="111" height="61" fill="url(#gg)"/><path d="M573 152h97v3.500a4.500 4.500 0 0 1-4.500 4.500H577.500a4.500 4.500 0 0 1-4.500-4.500z" fill="#f6f8f4"/><rect x="578" y="154.500" width="9" height="3" rx=".8" fill="#c9a6c0"/><rect x="589" y="154.500" width="8" height="3" rx=".8" fill="#7a8aa8"/><rect x="598.5" y="154.500" width="3" height="3" rx=".8" fill="#2b78a8"/><rect x="603" y="154.500" width="3" height="3" rx=".8" fill="#b8b06a"/><rect x="607.5" y="154.500" width="2.5" height="3" rx=".8" fill="#5a7ad0"/><rect x="611" y="154.500" width="2" height="3" rx=".8" fill="#d0a040"/><rect x="636" y="154.500" width="6" height="3" rx=".8" fill="#e8b070"/><rect x="644" y="154.500" width="9" height="3" rx=".8" fill="#7fa8c0"/><rect x="655" y="154.500" width="8" height="3" rx=".8" fill="#d8a890"/><g stroke="#58c878" stroke-width=".6" fill="none" opacity=".55" filter="url(#bl2)"><path d="M568 200c8-16 14-20 20-8s10 12 20-4"/><path d="M568 190c8 8 16 14 24 4s8-14 16-12"/><path d="M568 182c10 2 14 12 22 18s14 4 20-2"/></g><g filter="url(#bl2)"><text x="575" y="168.300" font-family="Liberation Sans" font-weight="700" font-size="4.600" fill="#e8f2e8" letter-spacing="-.3">WEBINAR NASIONAL</text><rect x="582" y="170" width="28" height="1.100" fill="#d8d890" opacity=".8"/><rect x="575" y="172.800" width="33" height="1.100" fill="#d8d890" opacity=".8"/><rect x="647" y="164" width="27" height="3.400" rx="1.700" fill="#7fd090" opacity=".85"/><rect x="648" y="169.300" width="21" height="1.300" fill="#e8f2e8" opacity=".9"/><rect x="647.300" y="172.0" width="1.500" height="1.500" fill="#e06a5a"/><rect x="649.500" y="172.0" width="11.0" height="1.400" fill="#d8ead8" opacity=".8"/><rect x="647.300" y="174.7" width="1.500" height="1.500" fill="#e06a5a"/><rect x="649.500" y="174.7" width="9.5" height="1.400" fill="#d8ead8" opacity=".8"/><rect x="647.300" y="177.4" width="1.500" height="1.500" fill="#e06a5a"/><rect x="649.500" y="177.4" width="8.0" height="1.400" fill="#d8ead8" opacity=".8"/><rect x="647.300" y="180.1" width="1.500" height="1.500" fill="#e06a5a"/><rect x="649.500" y="180.1" width="11.0" height="1.400" fill="#d8ead8" opacity=".8"/><rect x="647.300" y="182.8" width="1.500" height="1.500" fill="#e06a5a"/><rect x="649.500" y="182.8" width="9.5" height="1.400" fill="#d8ead8" opacity=".8"/><rect x="647.300" y="185.5" width="1.500" height="1.500" fill="#e06a5a"/><rect x="649.500" y="185.5" width="8.0" height="1.400" fill="#d8ead8" opacity=".8"/><rect x="647.300" y="188.2" width="1.500" height="1.500" fill="#e06a5a"/><rect x="649.500" y="188.2" width="11.0" height="1.400" fill="#d8ead8" opacity=".8"/><rect x="647.300" y="190.9" width="1.500" height="1.500" fill="#e06a5a"/><rect x="649.500" y="190.9" width="9.5" height="1.400" fill="#d8ead8" opacity=".8"/><rect x="647.300" y="193.6" width="1.500" height="1.500" fill="#e06a5a"/><rect x="649.500" y="193.6" width="8.0" height="1.400" fill="#d8ead8" opacity=".8"/></g><g filter="url(#bl)"><path d="M584 215c3-8 12-12 24-14l10-2h22l14-1c12 1 20 5 24 9v9z" fill="#4c666b"/><path d="M640 199l14-1c12 1 20 5 24 9v8h-30z" fill="#587378"/><path d="M613 198l8 16h14l8-16z" fill="#6a4838"/><path d="M606.500 178C605.500 161 612 153 627 153s21.500 8 20.500 25c-.5 11-3 19-8.500 24.500-4 4-20 4-24 0-5.500-5.500-8-13.500-8.500-24.500z" fill="url(#sk)"/><ellipse cx="627" cy="181" rx="5" ry="7" fill="#b08a70" opacity=".45"/><path d="M606 181C603.500 160 611 151 627 151s23.500 9 21 30c-.8-8-2.500-13.500-5.500-17-3.500-4-27.500-4-31 0-3 3.500-4.700 9-5.500 17z" fill="#2f3634"/><ellipse cx="628" cy="192" rx="8" ry="4.200" fill="#4a2a22"/><rect x="622" y="189.800" width="12" height="3" rx="1.300" fill="#f2efe8"/><circle cx="634" cy="186" r="1.600" fill="#e8e4dc"/></g><g filter="url(#bl2)"><rect x="613.500" y="169.500" width="13" height="8.500" rx="2.500" fill="#9a8a80" fill-opacity=".55" stroke="#2a2624" stroke-width="1.300"/><rect x="631" y="169.500" width="13" height="8.500" rx="2.500" fill="#9a8a80" fill-opacity=".55" stroke="#2a2624" stroke-width="1.300"/><path d="M626.500 172.500h4.500M613.500 172l-5-1M644 172l3-.5" stroke="#2a2624" stroke-width="1.100"/><path d="M617 172l5 3M634 172l6 2.500" stroke="#efeae4" stroke-width="1.300" opacity=".8"/></g><rect x="566" y="207.500" width="27" height="6.500" fill="#1d2a24" opacity=".45"/><text x="567" y="213.300" font-family="Liberation Sans" font-weight="700" font-size="6.200" letter-spacing="-.25" fill="#fff">Munawar</text></svg></div>
</div>
<!--/VIDEO-->
<!--CHAT-->
<div class="abs" style="left:690px;top:152px;width:321px;height:477px;border:1px solid #dedede;border-radius:12px;background:#fff"></div>
<div class="abs" style="left:691px;top:190.500px;width:319px;height:1px;background:#e5e5e5"></div>
<div class="abs t" id="ct" style="left:710px;top:166px;font-size:12.500px;color:#0f0f0f">Chat teratas</div>
<svg class="abs" style="left:782px;top:169px" width="13" height="8" viewBox="0 0 13 8"><path d="M1 1l5.500 5.500L12 1" stroke="#0f0f0f" stroke-width="1.400" fill="none"/></svg>
<div class="abs" style="left:894px;top:161px;width:47px;height:21px;border:1px solid #e2e2e2;border-radius:11px;background:#fff"></div>
<svg class="abs" style="left:899px;top:166px" width="12" height="11" viewBox="0 0 12 11"><path d="M1 8L.5 2.500 3.500 5 6 .8 8.500 5l3-2.500L11 8z" fill="#7a3fe0"/><rect x="1" y="9" width="10" height="1.600" fill="#7a3fe0"/></svg>
<div class="abs t" style="left:913px;top:166px;font-size:11.300px;color:#0f0f0f;-webkit-text-stroke:.4px #0f0f0f;letter-spacing:-.3px">0XP</div>
<svg class="abs" style="left:954px;top:164px" width="4" height="16" viewBox="0 0 4 16"><circle cx="2" cy="2.500" r="1.500" fill="#0f0f0f"/><circle cx="2" cy="8" r="1.500" fill="#0f0f0f"/><circle cx="2" cy="13.500" r="1.500" fill="#0f0f0f"/></svg>
<svg class="abs" style="left:982px;top:166px" width="12" height="12" viewBox="0 0 12 12"><path d="M.8 .8l10.400 10.400M11.200 .8L.8 11.200" stroke="#0f0f0f" stroke-width="1.300"/></svg>
<div class="abs" style="left:710px;top:321px;width:18px;height:18px;border-radius:50%;background:#a04bc4;color:#fff;font-size:10px;font-weight:700;text-align:center;line-height:18px">A</div>
<div class="abs t cm" style="left:742px;top:323.500px;color:#606060">@aprianussiktaop</div>
<div class="abs" style="left:832px;top:320.500px;width:37px;height:18px;border-radius:9px;background:#6c3bd6"></div>
<svg class="abs" style="left:837px;top:324px" width="12" height="11" viewBox="0 0 12 11"><path d="M1.300 7.500L.8 2.500 3.800 5 6 1.200 8.200 5l3-2.500-.5 5z" fill="none" stroke="#fff" stroke-width="1.100" stroke-linejoin="round"/><path d="M1.300 9.700h9.400" stroke="#fff" stroke-width="1.100"/></svg>
<div class="abs t" style="left:850px;top:324.500px;font-size:10.500px;font-weight:700;color:#fff;letter-spacing:-.2px">#1</div>
<div class="abs t cm" style="left:875px;top:323.500px;color:#0f0f0f">hadir menyimak</div>
<svg class="abs" style="left:711.0px;top:347.0px;" width="16" height="16" viewBox="-15 -15 30 30"><defs><clipPath id="gc1"><circle r="7.300"/></clipPath></defs><rect x="-2.100" y="-14.600" width="4.200" height="5" rx=".6" fill="#1d2796" transform="rotate(0.0)"/><rect x="-2.100" y="-14.600" width="4.200" height="5" rx=".6" fill="#1d2796" transform="rotate(32.7)"/><rect x="-2.100" y="-14.600" width="4.200" height="5" rx=".6" fill="#1d2796" transform="rotate(65.5)"/><rect x="-2.100" y="-14.600" width="4.200" height="5" rx=".6" fill="#1d2796" transform="rotate(98.2)"/><rect x="-2.100" y="-14.600" width="4.200" height="5" rx=".6" fill="#1d2796" transform="rotate(130.9)"/><rect x="-2.100" y="-14.600" width="4.200" height="5" rx=".6" fill="#1d2796" transform="rotate(163.6)"/><rect x="-2.100" y="-14.600" width="4.200" height="5" rx=".6" fill="#1d2796" transform="rotate(196.4)"/><rect x="-2.100" y="-14.600" width="4.200" height="5" rx=".6" fill="#1d2796" transform="rotate(229.1)"/><rect x="-2.100" y="-14.600" width="4.200" height="5" rx=".6" fill="#1d2796" transform="rotate(261.8)"/><rect x="-2.100" y="-14.600" width="4.200" height="5" rx=".6" fill="#1d2796" transform="rotate(294.5)"/><rect x="-2.100" y="-14.600" width="4.200" height="5" rx=".6" fill="#1d2796" transform="rotate(327.3)"/><circle r="12" fill="#1d2796"/><circle r="10.700" fill="#aab0de"/><circle r="9.500" fill="#2a34a0"/><circle r="8.700" fill="#fff"/><g clip-path="url(#gc1)"><rect x="-8" y="-8" width="16" height="16" fill="#fff"/><path d="M-9 -6.500L6.500 9H-9z" fill="#e4222e"/><path d="M-6.500 -9H9V6.500z" fill="#2b2b2b"/><g stroke="#fff" stroke-width=".7" opacity=".75"><path d="M-8 0h16M-8 3.500h16M-8 -3.500h16M0 -8v16M3.500 -8v16M-3.500 -8v16"/></g></g><path d="M-7.45 9.53A12.1 12.1 0 0 0 7.45 9.53" stroke="#e3dc28" stroke-width="3.600" fill="none"/></svg>
<svg class="abs" style="left:711.0px;top:420.0px;" width="16" height="16" viewBox="-15 -15 30 30"><defs><clipPath id="gc2"><circle r="7.300"/></clipPath></defs><rect x="-2.100" y="-14.600" width="4.200" height="5" rx=".6" fill="#1d2796" transform="rotate(0.0)"/><rect x="-2.100" y="-14.600" width="4.200" height="5" rx=".6" fill="#1d2796" transform="rotate(32.7)"/><rect x="-2.100" y="-14.600" width="4.200" height="5" rx=".6" fill="#1d2796" transform="rotate(65.5)"/><rect x="-2.100" y="-14.600" width="4.200" height="5" rx=".6" fill="#1d2796" transform="rotate(98.2)"/><rect x="-2.100" y="-14.600" width="4.200" height="5" rx=".6" fill="#1d2796" transform="rotate(130.9)"/><rect x="-2.100" y="-14.600" width="4.200" height="5" rx=".6" fill="#1d2796" transform="rotate(163.6)"/><rect x="-2.100" y="-14.600" width="4.200" height="5" rx=".6" fill="#1d2796" transform="rotate(196.4)"/><rect x="-2.100" y="-14.600" width="4.200" height="5" rx=".6" fill="#1d2796" transform="rotate(229.1)"/><rect x="-2.100" y="-14.600" width="4.200" height="5" rx=".6" fill="#1d2796" transform="rotate(261.8)"/><rect x="-2.100" y="-14.600" width="4.200" height="5" rx=".6" fill="#1d2796" transform="rotate(294.5)"/><rect x="-2.100" y="-14.600" width="4.200" height="5" rx=".6" fill="#1d2796" transform="rotate(327.3)"/><circle r="12" fill="#1d2796"/><circle r="10.700" fill="#aab0de"/><circle r="9.500" fill="#2a34a0"/><circle r="8.700" fill="#fff"/><g clip-path="url(#gc2)"><rect x="-8" y="-8" width="16" height="16" fill="#fff"/><path d="M-9 -6.500L6.500 9H-9z" fill="#e4222e"/><path d="M-6.500 -9H9V6.500z" fill="#2b2b2b"/><g stroke="#fff" stroke-width=".7" opacity=".75"><path d="M-8 0h16M-8 3.500h16M-8 -3.500h16M0 -8v16M3.500 -8v16M-3.500 -8v16"/></g></g><path d="M-7.45 9.53A12.1 12.1 0 0 0 7.45 9.53" stroke="#e3dc28" stroke-width="3.600" fill="none"/></svg>
<div class="abs" style="left:742px;top:346px;width:101px;height:14.500px;background:#ffd84a;border-radius:2px"></div>
<div class="abs t cm" style="left:744.700px;top:348px;color:#0f0f0f;font-size:10.600px;letter-spacing:-.03px;-webkit-text-stroke:.35px #0f0f0f">@universitasstekom</div>
<div class="abs t cm" style="left:850px;top:348px">Bagi peserta yang ingin</div>
<div class="abs t cm" style="left:742px;top:361.1px">bertanya kepada Bapak Migunani dipersilahkan</div>
<div class="abs t cm" style="left:742px;top:374.2px">menulis dikolom chat maupun raisehand pada sesi</div>
<div class="abs t cm" style="left:742px;top:387.3px">tanya jawab, untuk materi dan absensi akan dibagikan</div>
<div class="abs t cm" style="left:742px;top:400.4px">diakhir acara, Trimakasih</div>
<div class="abs" style="left:742px;top:419px;width:101px;height:14.500px;background:#ffd84a;border-radius:2px"></div>
<div class="abs t cm" style="left:744.700px;top:421px;color:#0f0f0f;font-size:10.600px;letter-spacing:-.03px;-webkit-text-stroke:.35px #0f0f0f">@universitasstekom</div>
<div class="abs t cm" style="left:850px;top:421px">Bagi peserta yang ingin</div>
<div class="abs t cm" style="left:742px;top:434.1px">bertanya kepada Bapak Reza dipersilahkan menulis</div>
<div class="abs t cm" style="left:742px;top:447.2px">dikolom chat maupun raisehand pada sesi tanya</div>
<div class="abs t cm" style="left:742px;top:460.3px">jawab, untuk materi dan absensi akan dibagikan</div>
<div class="abs t cm" style="left:742px;top:473.4px">diakhir acara, Trimakasih</div>
<div class="abs" style="left:710px;top:491px;width:281px;height:85px;border-radius:4px;background:#f2f2f2"></div>
<svg class="abs" style="left:724px;top:504.500px" width="16" height="11.500" viewBox="0 0 16 11.500"><rect width="16" height="11.500" rx="3" fill="#ff0033"/><path d="M6.300 3.200v5.100L10.800 5.750z" fill="#fff"/></svg>
<div class="abs t bn" style="left:754px;top:502px">Selamat datang di live chat! Ingatlah untuk</div>
<div class="abs t bn" style="left:754px;top:515px">melindungi privasi Anda dan mematuhi pedoman</div>
<div class="abs t bn" style="left:754px;top:528px">komunitas kami.</div>
<div class="abs t" id="pl" style="left:754px;top:549px;font-size:11.500px;color:#065fd4;-webkit-text-stroke:.3px #065fd4">Pelajari lebih lanjut</div>
<div class="abs" style="left:691px;top:582px;width:319px;height:1px;background:#e5e5e5"></div>
<div class="abs" style="left:710px;top:591px;width:243px;height:29px;border-radius:15px;background:#f2f2f2"></div>
<div class="abs t" style="left:719px;top:599px;font-size:12px;color:#717171">Chat...</div>
<svg class="abs" style="left:929px;top:596px" width="19" height="19" viewBox="0 0 19 19"><circle cx="9.500" cy="9.500" r="7.800" fill="none" stroke="#0f0f0f" stroke-width="1.300"/><circle cx="6.800" cy="7.600" r="1.100" fill="#0f0f0f"/><circle cx="12.200" cy="7.600" r="1.100" fill="#0f0f0f"/><path d="M5.800 11.300a4 4 0 0 0 7.400 0" stroke="#0f0f0f" stroke-width="1.300" fill="none"/></svg>
<div class="abs" style="left:962px;top:591px;width:29px;height:29px;border-radius:50%;background:#f2f2f2"></div>
<svg class="abs" style="left:967px;top:597px" width="19" height="17" viewBox="0 0 19 17"><path d="M9.500 15.500C4 11 1.200 8.500 1.200 5.300 1.200 3 3 1.200 5.200 1.200c1.700 0 3.300 1 4.300 2.600 1-1.600 2.600-2.600 4.300-2.600 2.200 0 4 1.800 4 4.100 0 3.200-2.800 5.700-8.300 10.200z" fill="none" stroke="#0f0f0f" stroke-width="1.300" stroke-linejoin="round"/></svg>
<!--/CHAT-->
<!--BELOW-->
<div class="abs t" id="vt" style="left:13px;top:538.200px;font-size:16px;font-weight:700;color:#0f0f0f;letter-spacing:-.475px">WEBINAR NASIONAL: Sistem Informasi di Era Artificial Intelligence dan Big Data</div>
<div class="abs" style="left:13px;top:558px;width:73px;height:13.500px;border-radius:2px;background:#f0f0f0"></div>
<svg class="abs" style="left:17px;top:561.500px" width="11" height="7" viewBox="0 0 11 7"><rect x=".6" y=".8" width="5.600" height="5" rx="2.500" fill="none" stroke="#606060" stroke-width="1"/><rect x="4.800" y=".8" width="5.600" height="5" rx="2.500" fill="none" stroke="#606060" stroke-width="1"/></svg>
<div class="abs t" id="tp" style="left:30px;top:560px;font-size:9.700px;color:#4a4a4a;-webkit-text-stroke:.2px #4a4a4a">Tidak publik</div>
<svg class="abs" style="left:14.8px;top:580.5px;" width="27.0" height="27.0" viewBox="-15 -15 30 30"><defs><clipPath id="gc1"><circle r="7.300"/></clipPath></defs><rect x="-2.100" y="-14.600" width="4.200" height="5" rx=".6" fill="#1d2796" transform="rotate(0.0)"/><rect x="-2.100" y="-14.600" width="4.200" height="5" rx=".6" fill="#1d2796" transform="rotate(32.7)"/><rect x="-2.100" y="-14.600" width="4.200" height="5" rx=".6" fill="#1d2796" transform="rotate(65.5)"/><rect x="-2.100" y="-14.600" width="4.200" height="5" rx=".6" fill="#1d2796" transform="rotate(98.2)"/><rect x="-2.100" y="-14.600" width="4.200" height="5" rx=".6" fill="#1d2796" transform="rotate(130.9)"/><rect x="-2.100" y="-14.600" width="4.200" height="5" rx=".6" fill="#1d2796" transform="rotate(163.6)"/><rect x="-2.100" y="-14.600" width="4.200" height="5" rx=".6" fill="#1d2796" transform="rotate(196.4)"/><rect x="-2.100" y="-14.600" width="4.200" height="5" rx=".6" fill="#1d2796" transform="rotate(229.1)"/><rect x="-2.100" y="-14.600" width="4.200" height="5" rx=".6" fill="#1d2796" transform="rotate(261.8)"/><rect x="-2.100" y="-14.600" width="4.200" height="5" rx=".6" fill="#1d2796" transform="rotate(294.5)"/><rect x="-2.100" y="-14.600" width="4.200" height="5" rx=".6" fill="#1d2796" transform="rotate(327.3)"/><circle r="12" fill="#1d2796"/><circle r="10.700" fill="#aab0de"/><circle r="9.500" fill="#2a34a0"/><circle r="8.700" fill="#fff"/><g clip-path="url(#gc1)"><rect x="-8" y="-8" width="16" height="16" fill="#fff"/><path d="M-9 -6.500L6.500 9H-9z" fill="#e4222e"/><path d="M-6.500 -9H9V6.500z" fill="#2b2b2b"/><g stroke="#fff" stroke-width=".7" opacity=".75"><path d="M-8 0h16M-8 3.500h16M-8 -3.500h16M0 -8v16M3.500 -8v16M-3.500 -8v16"/></g></g><path d="M-7.45 9.53A12.1 12.1 0 0 0 7.45 9.53" stroke="#e3dc28" stroke-width="3.600" fill="none"/></svg>
<div class="abs t" id="cn" style="left:54px;top:581px;font-size:13.200px;letter-spacing:-.43px;color:#0f0f0f;-webkit-text-stroke:.25px #0f0f0f">Universitas STEKOM</div>
<div class="abs t" id="sb" style="left:54px;top:599px;font-size:9.500px;color:#606060">28,8 rb subscriber</div>
<div class="abs" style="left:192px;top:580.500px;width:75px;height:28.500px;border-radius:14.500px;background:#0f0f0f"></div>
<div class="abs t" id="su" style="left:204px;top:589px;font-size:11.500px;font-weight:700;color:#fff;letter-spacing:-.6px">Subscribe</div>
<div class="abs" style="left:361.300px;top:581px;width:92.700px;height:28px;border-radius:14px;background:#f2f2f2"></div>
<svg class="abs" style="left:370px;top:586px" width="17" height="17" viewBox="0 0 17 17"><path d="M7.700 2.300L5.600 7c-.25.550-.75.850-1.300.850H3.300c-.8 0-1.450.650-1.450 1.450v4.500c0 .8.650 1.450 1.450 1.450h8.900c1 0 1.900-.7 2.100-1.700l.9-4.500c.25-1.300-.7-2.450-2-2.450h-3.100l.55-2.100c.15-.55.2-.95.200-1.300 0-1.100-.75-1.950-1.800-1.950-.6 0-1.100.400-1.350 1.050z" fill="none" stroke="#0f0f0f" stroke-width="1.400" stroke-linejoin="round"/></svg>
<div class="abs t" style="left:393px;top:589.500px;font-size:11px;color:#0f0f0f;-webkit-text-stroke:.25px #0f0f0f">1</div>
<div class="abs" style="left:411.500px;top:587px;width:1px;height:16px;background:#d4d4d4"></div>
<svg class="abs" style="left:423px;top:587px" width="17" height="17" viewBox="0 0 17 17"><g transform="rotate(180 8.500 8.500)"><path d="M7.700 2.300L5.600 7c-.25.550-.75.850-1.300.850H3.300c-.8 0-1.450.650-1.450 1.450v4.500c0 .8.650 1.450 1.450 1.450h8.900c1 0 1.900-.7 2.100-1.700l.9-4.500c.25-1.300-.7-2.450-2-2.450h-3.100l.55-2.100c.15-.55.2-.95.200-1.300 0-1.100-.75-1.950-1.800-1.950-.6 0-1.100.400-1.350 1.050z" fill="none" stroke="#0f0f0f" stroke-width="1.400" stroke-linejoin="round"/></g></svg>
<div class="abs" style="left:461px;top:581px;width:85px;height:28px;border-radius:14px;background:#f2f2f2"></div>
<svg class="abs" style="left:469px;top:586px" width="18" height="17" viewBox="0 0 18 17"><path d="M10.500 2l6 5.700-6 5.700v-3.300c-4 0-6.500 1.200-8.800 4.400.8-4.600 3.300-8.300 8.800-9.100z" fill="none" stroke="#0f0f0f" stroke-width="1.200" stroke-linejoin="round"/></svg>
<div class="abs t" id="bg" style="left:493px;top:589.500px;font-size:11px;color:#0f0f0f;-webkit-text-stroke:.25px #0f0f0f">Bagikan</div>
<div class="abs" style="left:559px;top:581px;width:82.500px;height:28px;border-radius:14px;background:#f2f2f2"></div>
<svg class="abs" style="left:569px;top:586.500px" width="14" height="17" viewBox="0 0 14 17"><path d="M1.200 1h11.600v14.500L7 12.200 1.200 15.500z" fill="none" stroke="#0f0f0f" stroke-width="1.200" stroke-linejoin="round"/></svg>
<div class="abs t" id="sp" style="left:591px;top:589.500px;font-size:11px;color:#0f0f0f;-webkit-text-stroke:.25px #0f0f0f">Simpan</div>
<div class="abs" style="left:648px;top:581px;width:28px;height:28px;border-radius:50%;background:#f2f2f2"></div>
<svg class="abs" style="left:655px;top:593px" width="14" height="4" viewBox="0 0 14 4"><circle cx="2" cy="2" r="1.400" fill="#0f0f0f"/><circle cx="7" cy="2" r="1.400" fill="#0f0f0f"/><circle cx="12" cy="2" r="1.400" fill="#0f0f0f"/></svg>
<div class="abs" style="left:13px;top:622px;width:327px;height:40px;border-radius:10px;background:#f2f2f2"></div>
<div class="abs t" id="ds" style="left:22px;top:633px;font-size:11.260px;color:#0f0f0f;-webkit-text-stroke:.3px #0f0f0f">7 sedang menonton&nbsp; Streaming dimulai 84 menit yang lalu</div>
<div class="abs" style="left:350px;top:622px;width:327px;height:40px;border-radius:10px;background:#f2f2f2"></div>
<div class="abs t" style="left:360px;top:633px;font-size:11px;color:#0f0f0f;-webkit-text-stroke:.25px #0f0f0f">Live chat</div>
<!--/BELOW-->
</div></body></html>
